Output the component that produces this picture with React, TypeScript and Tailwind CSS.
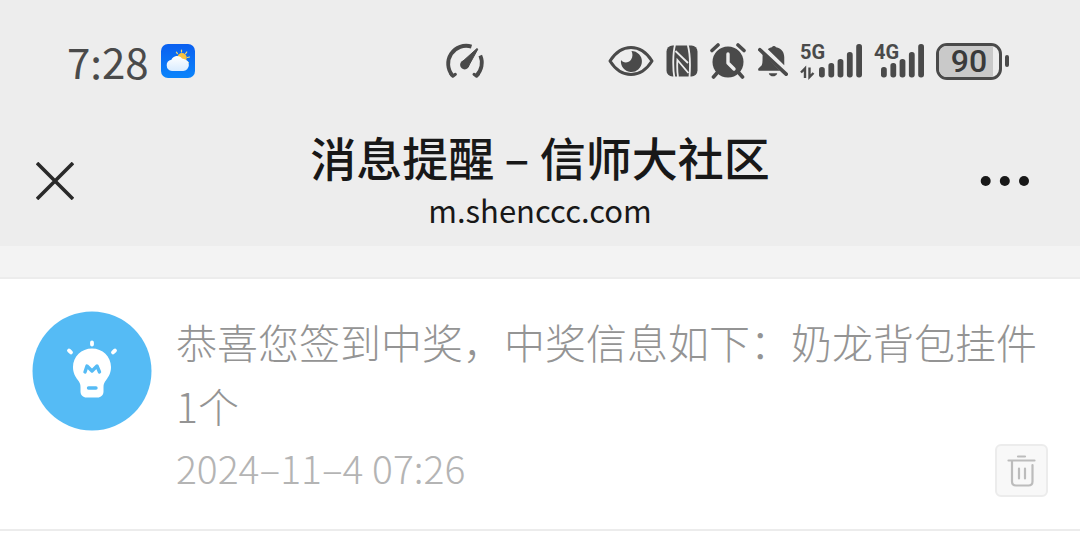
import React from 'react';

const DARK = '#4a4a4a';

const WeatherIcon = () => (
  <svg viewBox="0 0 34 34" className="size-[34px]" aria-hidden="true">
    <defs>
      <linearGradient id="sky" x1="0" y1="0" x2="0" y2="1">
        <stop offset="0" stopColor="#0a5ff0" />
        <stop offset="1" stopColor="#0a84fb" />
      </linearGradient>
      <linearGradient id="cloud" x1="0" y1="0" x2="0" y2="1">
        <stop offset="0" stopColor="#ffffff" />
        <stop offset="1" stopColor="#d9ecff" />
      </linearGradient>
    </defs>
    <rect width="34" height="34" rx="7" fill="url(#sky)" />
    <g stroke="#f5d76a" strokeWidth="1.2" strokeLinecap="round">
      <path d="M20.5 6v2M15.4 8.2l1 1.4M25.8 8l-1.2 1.7M28.5 13l-2 .5M25.6 17.5l1.8 1" />
    </g>
    <circle cx="21" cy="13.8" r="4.8" fill="#f8c341" />
    <path d="M11 27a5.700 5.700 0 0 1-.6-11.300 6.200 6.200 0 0 1 10.600-1.300 5 5 0 0 1 1.800.5 6.100 6.100 0 0 1-.6 12.100z" fill="url(#cloud)" />
  </svg>
);

const GaugeIcon = () => (
  <svg viewBox="-1 -1 42 40" className="h-10 w-[42px]" fill="none" stroke={DARK} strokeWidth="3.800" strokeLinejoin="round" aria-hidden="true">
    <path d="M26.500 4.600A18 18 0 0 0 7.500 33.500" />
    <path d="M35.300 13.500A18 18 0 0 1 31.500 33.500" />
    <path d="M5.800 32l2 2.300 2.600-2M29 32.300l2.600 2 2-2.300" strokeWidth="3" strokeLinecap="round" />
    <path d="M17 20L32 6.500l.8.7L23 25z" fill={DARK} strokeWidth="1" />
    <circle cx="19.700" cy="22.800" r="4.600" fill={DARK} stroke="none" />
  </svg>
);

const EyeIcon = () => (
  <svg viewBox="0 0 46 32" className="h-8 w-[46px]" aria-hidden="true">
    <path d="M2 16C8 6.500 15 2.500 23 2.500S38 6.500 44 16C38 25.500 31 29.500 23 29.500S8 25.500 2 16z" fill="none" stroke={DARK} strokeWidth="3" strokeLinejoin="round" />
    <path d="M23.500 6a10.500 10.500 0 1 1-10.500 9c2 3.300 7.500 3.300 10-.2 2-3 1.700-6.300.5-8.800z" fill={DARK} />
  </svg>
);

const NfcIcon = () => (
  <svg viewBox="0 0 32 32" className="size-8" aria-hidden="true">
    <rect x=".5" y=".5" width="31" height="31" rx="6" fill={DARK} />
    <g fill="none" stroke="#ededed" strokeWidth="1.800">
      <path d="M9 0C6.800 8 6.800 24 8.300 32" />
      <path d="M21.800 0c2.200 8 2.500 21 1.700 32" />
      <path d="M9.500 6L22 18" />
      <path d="M12 32c-.9-6-1-11-.6-17l11 13" />
    </g>
  </svg>
);

const AlarmIcon = () => (
  <svg viewBox="0 0 36 36" className="size-9" aria-hidden="true">
    <circle cx="18" cy="19" r="15.500" fill={DARK} />
    <path d="M7 30l-3.500 4M29 30l3.500 4M2 7.500L8 2M34 7.500L28 2" stroke={DARK} strokeWidth="3.600" strokeLinecap="round" />
    <path d="M18 11v9l6 6" fill="none" stroke="#ededed" strokeWidth="3.400" strokeLinecap="round" strokeLinejoin="round" />
  </svg>
);

const MutedBellIcon = () => (
  <svg viewBox="0 0 32 36" className="h-9 w-[30px]" aria-hidden="true">
    <path d="M10.500 5.500c1-1.300 2.800-2 4.300-2.300a2.800 2.800 0 0 1 4.400 0C25 4 28 8.500 28 14v8.500z" fill={DARK} />
    <path d="M5 10.500L23.500 28.500H1.500c-1.500 0-1.800-1.700-.8-2.700L4 22.500c1.300-3 .6-7 1-12z" fill={DARK} />
    <path d="M11.500 31h9c-1 4.500-8 4.500-9 0z" fill={DARK} />
    <path d="M2 6l28 26" stroke={DARK} strokeWidth="4" strokeLinecap="round" />
  </svg>
);

const Signal = ({ label, arrows }: { label: string; arrows?: boolean }) => (
  <svg
    viewBox={arrows ? '0 -6 62 48' : '0 -6 50 48'}
    className={arrows ? 'h-12 w-[62px] overflow-visible' : 'h-12 w-[50px] overflow-visible'}
    fill={DARK}
    role="img"
    aria-label={label}
  >
    <text x="0" y="16" fontSize="20" fontWeight="700" fontFamily="Roboto, sans-serif">{label}</text>
    {arrows && <path d="M5 35V25.500L1 29.500M9.500 24.500V34l4-4" fill="none" stroke={DARK} strokeWidth="2.400" />}
    <g transform={arrows ? 'translate(19 0)' : 'translate(7 0)'}>
      <rect x="0" y="24" width="5.800" height="10.500" rx="2.700" />
      <rect x="9.400" y="20" width="5.800" height="14.500" rx="2.700" />
      <rect x="18.600" y="16" width="5.800" height="18.500" rx="2.700" />
      <rect x="27.900" y="9" width="5.800" height="25.500" rx="2.700" />
      <rect x="37.200" y="1" width="5.800" height="33.500" rx="2.700" />
    </g>
  </svg>
);

const Battery = ({ level }: { level: number }) => (
  <div className="flex items-center gap-[3px]">
    <div className="relative flex h-[37px] w-[66px] items-center justify-center overflow-hidden rounded-[11px] border-[3px] border-[#4a4a4a]">
      <div className="absolute inset-y-0 left-0 bg-[#c9c9c9]" style={{ width: `${level}%` }} />
      <span className="relative font-[Roboto,sans-serif] text-[32px] leading-8 font-medium text-[#3a3a3a]">{level}</span>
    </div>
    <div className="h-3 w-1 rounded-full bg-[#4a4a4a]" />
  </div>
);

const BulbAvatar = () => (
  <svg viewBox="0 0 120 120" className="mt-0.5 size-[120px] shrink-0" aria-hidden="true">
    <circle cx="60" cy="60" r="59.500" fill="#55bbf5" />
    <g stroke="#fff" strokeWidth="3.800" strokeLinecap="round">
      <path d="M60 31.500v2M37 39.500l2 1.900M83 39.500l-2 1.900" />
    </g>
    <path d="M60 37.500c10.500 0 19 8 19 18.500 0 6-2.300 9.500-4.800 13-2 2.800-2.700 4-2.700 7v4.500c0 3.500-2.500 6-6 6h-11c-3.500 0-6-2.500-6-6V76c0-3-.7-4.200-2.700-7-2.500-3.500-4.800-7-4.800-13 0-10.500 8.500-18.500 19-18.500z" fill="#fff" />
    <path d="M53 61l2-6 5 5 5-5 2.500 6M56.500 77h7.500" fill="none" stroke="#55bbf5" strokeWidth="3.400" strokeLinecap="round" strokeLinejoin="round" />
  </svg>
);

const TrashIcon = () => (
  <svg viewBox="0 0 30 34" className="h-[34px] w-[30px]" fill="none" stroke="#bcbcbc" strokeWidth="2.200" strokeLinecap="round" aria-hidden="true">
    <path d="M11 2.500h7M1.500 6.500h26M5 7v20.500c0 2.500 1.500 4 4 4h12.500c2.500 0 4-1.500 4-4V11M12 14.500v10M18 14.500v10" />
  </svg>
);

export default function App() {
  return (
    <div className="min-h-screen bg-white font-['Noto_Sans_CJK_SC',sans-serif]">
      <header className="bg-[#ededed]">
        {/* Status bar */}
        <div className="flex h-[122px] items-center pr-[71px] pl-[67px]">
          <div className="flex w-2/5 items-center gap-3 text-[#4a4a4a]">
            <span className="text-[42px] leading-[42px]">7:28</span>
            <WeatherIcon />
          </div>
          <GaugeIcon />
          <div className="ml-auto flex items-center gap-3">
            <EyeIcon />
            <NfcIcon />
            <AlarmIcon />
            <MutedBellIcon />
            <Signal label="5G" arrows />
            <Signal label="4G" />
            <Battery level={90} />
          </div>
        </div>

        {/* Title bar */}
        <div className="grid h-[124px] grid-cols-[1fr_auto_1fr] items-start px-8">
          <button type="button" aria-label="关闭" className="mt-9 justify-self-start p-1">
            <svg viewBox="0 0 38 38" className="size-[38px]" stroke="#2a2a2a" strokeWidth="3.600">
              <path d="M1 1l36 36M37 1L1 37" />
            </svg>
          </button>
          <div className="text-center text-[#181818]">
            <h1 className="mt-1.5 text-[46px] leading-[56px] font-medium">消息提醒 – 信师大社区</h1>
            <p className="text-[31px] leading-[52px]">m.shenccc.com</p>
          </div>
          <button type="button" aria-label="更多" className="mt-10 justify-self-end px-4 py-3">
            <svg viewBox="0 0 54 14" className="h-3.5 w-[54px]" fill="#181818">
              <circle cx="7.700" cy="7" r="5" />
              <circle cx="26.800" cy="7" r="5" />
              <circle cx="46" cy="7" r="5" />
            </svg>
          </button>
        </div>
      </header>

      <main className="border-t-[31px] border-[#f3f3f3]">
        <article className="flex gap-6 border-y-2 border-[#ececec] px-8 pt-[30px] pb-8 font-light">
          <BulbAvatar />
          <div className="min-w-0 flex-1">
            <p className="text-[41px] leading-[64px] text-[#949494]">恭喜您签到中奖，中奖信息如下：奶龙背包挂件1个</p>
            <div className="flex items-end justify-between">
              <time dateTime="2024-11-04T07:26" className="text-[39px] leading-[60px] text-[#b4b4b4]">2024–11–4 07:26</time>
              <button type="button" aria-label="删除" className="flex size-[53px] items-center justify-center rounded-md border-2 border-[#ececec] bg-[#f8f8f8]">
                <TrashIcon />
              </button>
            </div>
          </div>
        </article>
      </main>
    </div>
  );
}
